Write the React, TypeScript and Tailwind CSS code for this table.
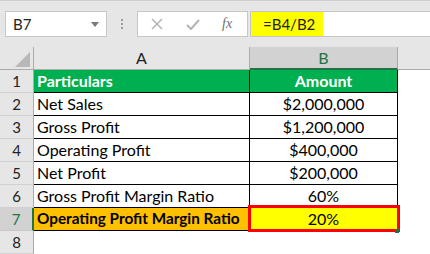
import React from "react";

const rows: { a: string; b: string }[] = [
  { a: "Net Sales", b: "$2,000,000" },
  { a: "Gross Profit", b: "$1,200,000" },
  { a: "Operating Profit", b: "$400,000" },
  { a: "Net Profit", b: "$200,000" },
  { a: "Gross Profit Margin Ratio", b: "60%" },
];

function RowHead({ n, active }: { n: number; active?: boolean }) {
  return (
    <div
      className={
        active
          ? "w-[34px] shrink-0 h-full flex items-center justify-center bg-[#d2d2d2] border-r-2 border-[#217346] border-b border-b-[#c8c8c8] text-[#217346] text-[15px]"
          : "w-[34px] shrink-0 h-full flex items-center justify-center bg-[#e6e6e6] border-r border-[#ababab] border-b border-b-[#d0d0d0] text-[#222] text-[15px]"
      }
    >
      {n}
    </div>
  );
}

export default function App() {
  return (
    <div
      className="w-[430px] h-[254px] overflow-hidden bg-[#e6e6e6] border-t border-[#cfcfcf] text-[15px] leading-none text-black"
      style={{ fontFamily: "Lato, 'Open Sans', sans-serif" }}
    >
      {/* formula bar */}
      <div className="flex items-center h-[26px] mt-[10px]">
        <div className="ml-[5px] w-[102px] h-[26px] bg-white border border-[#c6c6c6] flex items-center justify-between pl-[7px] pr-[7px] text-[15px] text-[#222]">
          <span>B7</span>
          <svg width="8" height="5" viewBox="0 0 8 5">
            <path d="M0 0 H8 L4 5 Z" fill="#7a7a7a" />
          </svg>
        </div>
        <div className="w-[30px] flex flex-col items-center gap-[2px]">
          <span className="w-[2px] h-[2px] bg-[#9a9a9a]" />
          <span className="w-[2px] h-[2px] bg-[#9a9a9a]" />
          <span className="w-[2px] h-[2px] bg-[#9a9a9a]" />
        </div>
        <div className="w-[111px] h-[26px] bg-white border border-[#c6c6c6] flex items-center">
          <svg width="12" height="12" viewBox="0 0 12 12" className="ml-[13px]">
            <path d="M1 1 L11 11 M11 1 L1 11" stroke="#b4b4b4" strokeWidth="1.5" />
          </svg>
          <svg width="14" height="11" viewBox="0 0 14 11" className="ml-[23px]">
            <path d="M1 6 L5 10 L13 1" stroke="#b4b4b4" strokeWidth="2" fill="none" />
          </svg>
          <span
            className="ml-[22px] text-[14px] italic text-[#707070]"
            style={{ fontFamily: "'Liberation Serif', serif" }}
          >
            fx
          </span>
        </div>
        <div className="flex-1 h-[26px] ml-[2px] bg-white border-y border-l border-[#c6c6c6] flex items-center">
          <div className="w-[72px] h-full bg-[#ffff00] flex items-center pl-[12px] text-[15px] text-[#222]">
            =B4/B2
          </div>
        </div>
      </div>

      {/* column headers */}
      <div className="flex h-[23px] mt-[10px]">
        <div className="w-[34px] shrink-0 border-r border-[#ababab] border-b border-b-[#ababab] relative">
          <svg width="15" height="15" viewBox="0 0 15 15" className="absolute left-[15px] top-[5px]">
            <path d="M15 0 V15 H0 Z" fill="#b8b8b8" />
          </svg>
        </div>
        <div className="w-[216px] shrink-0 flex items-center justify-center border-r border-[#ababab] border-b border-b-[#ababab] text-[#222] text-[16px]">
          A
        </div>
        <div className="w-[148px] shrink-0 flex items-center justify-center bg-[#d2d2d2] border-r border-[#ababab] border-b-2 border-b-[#217346] text-[#217346] text-[16px]">
          B
        </div>
        <div className="flex-1 border-b border-[#ababab]" />
      </div>

      {/* body */}
      <div className="bg-white text-[16px]">
        <div className="flex h-[23px]">
          <RowHead n={1} />
          <div className="w-[216px] shrink-0 bg-[#00b050] text-white font-bold flex items-center pl-[3px] border-r border-b border-black">
            Particulars
          </div>
          <div className="w-[148px] shrink-0 bg-[#00b050] text-white font-bold flex items-center justify-center border-r border-b border-black">
            Amount
          </div>
          <div className="flex-1" />
        </div>
        {rows.map((r, i) => (
          <div key={r.a} className="flex h-[23px]">
            <RowHead n={i + 2} />
            <div className="w-[216px] shrink-0 flex items-center pl-[3px] border-r border-b border-black">
              {r.a}
            </div>
            <div className="w-[148px] shrink-0 flex items-center justify-center border-r border-b border-black">
              {r.b}
            </div>
            <div className="flex-1" />
          </div>
        ))}
        <div className="flex h-[23px]">
          <RowHead n={7} active />
          <div className="w-[215px] shrink-0 bg-[#ffc000] font-bold text-[15.3px] whitespace-nowrap flex items-center pl-[3px] border-b border-black">
            Operating Profit Margin Ratio
          </div>
          <div className="w-[149px] shrink-0 relative bg-[#ffff00] flex items-center justify-center border-b border-black">
            20%
            <div className="absolute -left-[1px] -top-[3px] w-[152px] h-[27px] border-[3px] border-[#ff0000]" />
            <div className="absolute left-[146px] top-[21px] w-[4px] h-[4px] bg-[#217346]" />
          </div>
          <div className="flex-1" />
        </div>
        <div className="flex h-[23px]">
          <RowHead n={8} />
          <div className="flex-1" />
        </div>
      </div>
    </div>
  );
}
